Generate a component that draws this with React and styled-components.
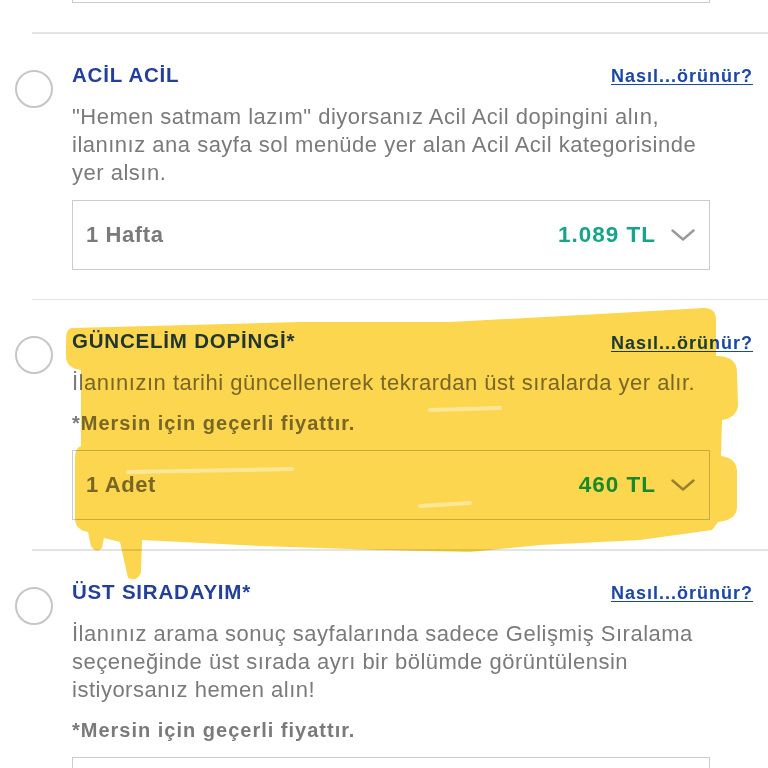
import styled, { createGlobalStyle } from "styled-components";

const Global = createGlobalStyle`
    body {
        margin: 0;
        background: #fff;
    }
`

const Page = styled.div`
    position: relative;
    width: 768px;
    height: 768px;
    overflow: hidden;
    background: #fff;
    font-family: "Liberation Sans", Arial, sans-serif;
`
const Tail = styled.div`
    padding: 0 0 29px 72px;
`
const Divider = styled.div`
    margin-left: 32px;
    height: 1.5px;
    background: #e4e4e4;
`
const Section = styled.section`
    display: grid;
    grid-template-columns: 72px 1fr;
    padding: 29px 15px 29px 0;
`
const Radio = styled.span`
    width: 38px;
    height: 38px;
    box-sizing: border-box;
    border: 2px solid #c6c6c6;
    border-radius: 50%;
    margin: 7px 0 0 15px;
`
const Head = styled.div`
    display: flex;
    justify-content: space-between;
    align-items: center;
    height: 24px;
    margin-bottom: 16px;
`
const Title = styled.h3`
    margin: 0;
    font-size: 20.5px;
    line-height: 24px;
    font-weight: 700;
    letter-spacing: 0.8px;
    color: #233f9b;
`
const HowLink = styled.a`
    padding-top: 4px;
    font-size: 18px;
    font-weight: 700;
    letter-spacing: 1px;
    color: #1b47a5;
    text-decoration: underline;
    text-underline-offset: 2px;
`
const Desc = styled.p`
    margin: 0;
    font-size: 22px;
    line-height: 28px;
    letter-spacing: 0.5px;
    color: #7a7a7a;
`
const Note = styled.p`
    margin: 12px 0 0;
    font-size: 20px;
    line-height: 28px;
    font-weight: 700;
    letter-spacing: 1px;
    color: #7a7a7a;
`
const Select = styled.div`
    margin: ${props => props.pull ? "-67px 0 0 0" : "13px 0 0 0"};
    width: 638px;
    height: 70px;
    box-sizing: border-box;
    border: 1.5px solid #cbcbcb;
    display: flex;
    align-items: center;
    padding: 0 14px 0 13px;
`
const Label = styled.span`
    flex: 1;
    font-size: 22px;
    font-weight: 700;
    letter-spacing: 0.6px;
    color: #7a7a7a;
`
const Price = styled.span`
    font-size: 22.5px;
    font-weight: 700;
    letter-spacing: 1px;
    color: #17a589;
    margin-right: 15px;
`
const Marker = styled.svg`
    position: absolute;
    top: 0;
    left: 0;
    pointer-events: none;
    mix-blend-mode: multiply;
`

function Chevron() {
    return (
        <svg width="24" height="12" viewBox="0 0 24 12">
            <path d="M1.5 1.5 L12 10.5 L22.5 1.5" fill="none" stroke="#9a9a9a" strokeWidth="2.4" strokeLinecap="round" strokeLinejoin="round" />
        </svg>
    )
}

function Option({ title, desc, note, label, price, open = true }) {
    return (
        <Section>
            <Radio />
            <div>
                <Head>
                    <Title>{title}</Title>
                    <HowLink>Nasıl...örünür?</HowLink>
                </Head>
                <Desc>{desc}</Desc>
                {note ? <Note>*Mersin için geçerli fiyattır.</Note> : null}
                {open ? (
                    <Select>
                        <Label>{label}</Label>
                        <Price>{price}</Price>
                        <Chevron />
                    </Select>
                ) : <Select />}
            </div>
        </Section>
    )
}

export default function App() {
    return (
        <Page>
            <Global />
            <Tail><Select pull /></Tail>
            <Divider />
            <Option
                title="ACİL ACİL"
                desc={<>"Hemen satmam lazım" diyorsanız Acil Acil dopingini alın,<br />ilanınız ana sayfa sol menüde yer alan Acil Acil kategorisinde<br />yer alsın.</>}
                label="1 Hafta"
                price="1.089 TL"
            />
            <Divider />
            <Option
                title="GÜNCELİM DOPİNGİ*"
                desc="İlanınızın tarihi güncellenerek tekrardan üst sıralarda yer alır."
                note
                label="1 Adet"
                price="460 TL"
            />
            <Divider />
            <Option
                title="ÜST SIRADAYIM*"
                desc={<>İlanınız arama sonuç sayfalarında sadece Gelişmiş Sıralama<br />seçeneğinde üst sırada ayrı bir bölümde görüntülensin<br />istiyorsanız hemen alın!</>}
                note
                open={false}
            />
            <Marker width="768" height="768" viewBox="0 0 768 768">
                <path
                    fill="#fbd64e"
                    d="M72 328 L300 322 L450 322 L600 314 L704 308 Q716 308 716 320 L716 356 Q737 356 737 372 L738 406 Q736 418 722 420 L721 456 Q737 458 737 472 L737 508 Q736 520 718 522 L712 530 L640 540 L540 545 L470 552 L380 550 L260 546 L142 540 L141 572 Q138 582 128 578 L120 542 L104 538 L102 548 Q96 554 91 546 L88 532 Q75 530 75 518 L75 458 Q75 448 81 446 L81 370 Q66 368 66 356 L66 340 Q66 328 72 328 Z"
                />
                <g stroke="#fde9a6" strokeWidth="4" strokeLinecap="round" fill="none" opacity="0.85">
                    <path d="M128 472 L292 469" />
                    <path d="M430 410 L500 408" />
                    <path d="M420 506 L470 503" />
                </g>
            </Marker>
        </Page>
    )
}
